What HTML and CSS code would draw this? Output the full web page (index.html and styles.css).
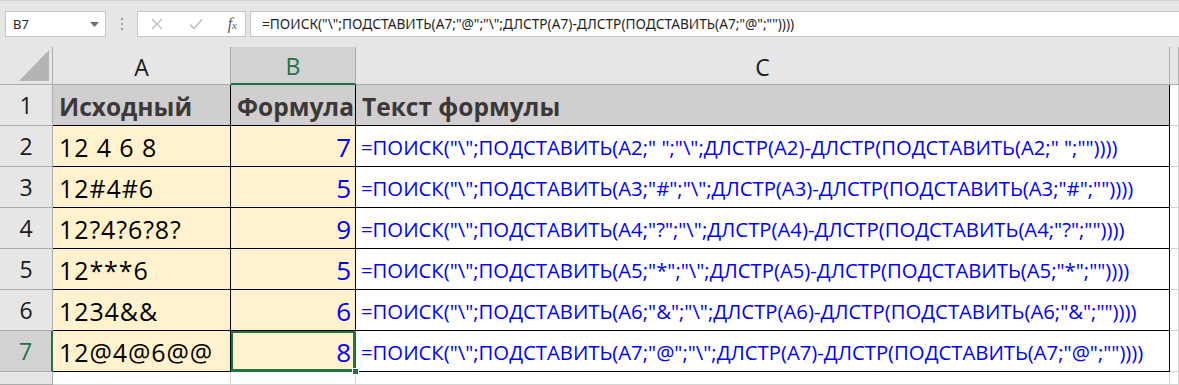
FILE: index.html
```html
<!DOCTYPE html>
<html lang="ru">

<head>
    <meta charset="UTF-8">
    <title>ПОИСК последнего символа</title>
    <link rel="stylesheet" href="styles.css">
</head>

<body>
    <div class="toolbar">
        <div class="namebox">
            <span>B7</span>
            <svg class="arrow" width="9" height="5" viewBox="0 0 9 5"><path d="M0 0h9L4.5 5z" fill="#6d6d6d"/></svg>
        </div>
        <div class="dots"><i></i><i></i><i></i></div>
        <div class="buttons">
            <svg width="14" height="14" viewBox="0 0 14 14"><path d="M2 2l10 10M12 2L2 12" stroke="#b8b8b8" stroke-width="1.3" fill="none"/></svg>
            <svg width="16" height="14" viewBox="0 0 16 14"><path d="M2 7.5l4 4 8-9" stroke="#b8b8b8" stroke-width="1.3" fill="none"/></svg>
            <span class="fx">f<small>x</small></span>
        </div>
        <div class="formula">=ПОИСК("\";ПОДСТАВИТЬ(A7;"@";"\";ДЛСТР(A7)-ДЛСТР(ПОДСТАВИТЬ(A7;"@";""))))</div>
    </div>

    <div class="sheet">
        <div class="hd corner"><svg width="30" height="31" viewBox="0 0 30 31"><path d="M30 0V31H0z" fill="#b4b4b4"/></svg></div>
        <div class="hd col">A</div>
        <div class="hd col sel">B</div>
        <div class="hd col">C</div>
        <div class="hd col last"></div>

        <div class="hd row">1</div>
        <div class="cell title">Исходный</div>
        <div class="cell title">Формула</div>
        <div class="cell title">Текст формулы</div>
        <div class="grid"></div>

        <div class="hd row">2</div>
        <div class="cell src">12 4 6 8</div>
        <div class="cell num">7</div>
        <div class="cell text">=ПОИСК("\";ПОДСТАВИТЬ(A2;" ";"\";ДЛСТР(A2)-ДЛСТР(ПОДСТАВИТЬ(A2;" ";""))))</div>
        <div class="grid"></div>

        <div class="hd row">3</div>
        <div class="cell src">12#4#6</div>
        <div class="cell num">5</div>
        <div class="cell text">=ПОИСК("\";ПОДСТАВИТЬ(A3;"#";"\";ДЛСТР(A3)-ДЛСТР(ПОДСТАВИТЬ(A3;"#";""))))</div>
        <div class="grid"></div>

        <div class="hd row">4</div>
        <div class="cell src">12?4?6?8?</div>
        <div class="cell num">9</div>
        <div class="cell text">=ПОИСК("\";ПОДСТАВИТЬ(A4;"?";"\";ДЛСТР(A4)-ДЛСТР(ПОДСТАВИТЬ(A4;"?";""))))</div>
        <div class="grid"></div>

        <div class="hd row">5</div>
        <div class="cell src">12***6</div>
        <div class="cell num">5</div>
        <div class="cell text">=ПОИСК("\";ПОДСТАВИТЬ(A5;"*";"\";ДЛСТР(A5)-ДЛСТР(ПОДСТАВИТЬ(A5;"*";""))))</div>
        <div class="grid"></div>

        <div class="hd row">6</div>
        <div class="cell src">1234&amp;&amp;</div>
        <div class="cell num">6</div>
        <div class="cell text">=ПОИСК("\";ПОДСТАВИТЬ(A6;"&amp;";"\";ДЛСТР(A6)-ДЛСТР(ПОДСТАВИТЬ(A6;"&amp;";""))))</div>
        <div class="grid"></div>

        <div class="hd row sel">7</div>
        <div class="cell src">12@4@6@@</div>
        <div class="cell num active">8<span class="handle"></span></div>
        <div class="cell text">=ПОИСК("\";ПОДСТАВИТЬ(A7;"@";"\";ДЛСТР(A7)-ДЛСТР(ПОДСТАВИТЬ(A7;"@";""))))</div>
        <div class="grid"></div>

        <div class="hd row"></div>
        <div class="grid"></div>
        <div class="grid"></div>
        <div class="grid"></div>
        <div class="grid"></div>
    </div>
</body>
</html>
```

FILE: styles.css
```css
* {
    margin: 0;
    padding: 0;
    box-sizing: border-box;
}
body {
    width: 1179px;
    height: 385px;
    overflow: hidden;
    background-color: #e6e6e6;
    font-family: "Noto Sans", "Open Sans", sans-serif;
}
.toolbar {
    height: 47px;
    display: flex;
    align-items: center;
    padding: 0 0 0 5px;
    border-top: 1px solid #d4d4d4;
}
.namebox {
    width: 101px;
    height: 26px;
    background-color: white;
    border: 1px solid #c6c6c6;
    display: flex;
    align-items: center;
    justify-content: space-between;
    padding: 0 6px 0 7px;
    font-size: 13px;
    color: #262626;
}
.dots {
    width: 31px;
    display: flex;
    flex-direction: column;
    align-items: center;
    gap: 3px;
}
.dots i {
    width: 2px;
    height: 2px;
    background-color: #9a9a9a;
}
.buttons {
    width: 109px;
    height: 26px;
    background-color: white;
    border: 1px solid #c6c6c6;
    display: flex;
    align-items: center;
    justify-content: space-between;
    padding: 0 8px 0 12px;
}
.fx {
    font-family: "Liberation Serif", serif;
    font-style: italic;
    font-size: 16px;
    color: #5a5a5a;
}
.fx small {
    font-size: 11px;
}
.formula {
    flex: 1;
    height: 26px;
    margin-left: 4px;
    background-color: white;
    border: 1px solid #c6c6c6;
    border-right: none;
    padding-left: 11px;
    font-size: 13.7px;
    line-height: 24px;
    color: #1f1f1f;
    white-space: nowrap;
}
.sheet {
    display: grid;
    grid-template-columns: 53px 178px 125px 814px 9px;
    grid-template-rows: 38px repeat(7, 41px) 13px;
    background-color: white;
}
.hd {
    background-color: #e6e6e6;
    border-right: 1px solid #ababab;
    border-bottom: 1px solid #ababab;
    display: flex;
    align-items: center;
    justify-content: center;
    font-family: "Open Sans", sans-serif;
    font-size: 23px;
    color: #1a1a1a;
}
.corner {
    align-items: flex-end;
    justify-content: flex-end;
    padding: 0 3px 3px 0;
}
.col {
    padding-top: 2px;
}
.hd.sel {
    background-color: #d2d2d2;
    color: #217346;
}
.col.sel {
    border-bottom: 2px solid #217346;
}
.row.sel {
    border-right: 2px solid #217346;
}
.cell {
    border-right: 1px solid black;
    border-bottom: 1px solid black;
    display: flex;
    align-items: center;
    padding: 2px 4px 0 6px;
    font-family: "Open Sans", sans-serif;
    font-size: 25px;
    white-space: nowrap;
    overflow: hidden;
    position: relative;
}
.title {
    background-color: #d0cece;
    color: #3b3838;
    font-weight: bold;
    font-size: 24.5px;
}
.src {
    background-color: #fff2cc;
    color: black;
    letter-spacing: 0.9px;
}
.num {
    background-color: #fff2cc;
    color: #0000ff;
    justify-content: flex-end;
    font-size: 26px;
}
.text {
    color: #0000ff;
    font-size: 20.3px;
    padding-left: 5px;
}
.grid {
    border-right: 1px solid #d4d4d4;
    border-bottom: 1px solid #d4d4d4;
}
.active {
    overflow: visible;
    box-shadow: inset 0 0 0 2px #217346;
    border-color: #217346;
}
.handle {
    position: absolute;
    right: -4px;
    bottom: -4px;
    width: 7px;
    height: 7px;
    background-color: #217346;
    border: 1px solid white;
    z-index: 2;
}
```
